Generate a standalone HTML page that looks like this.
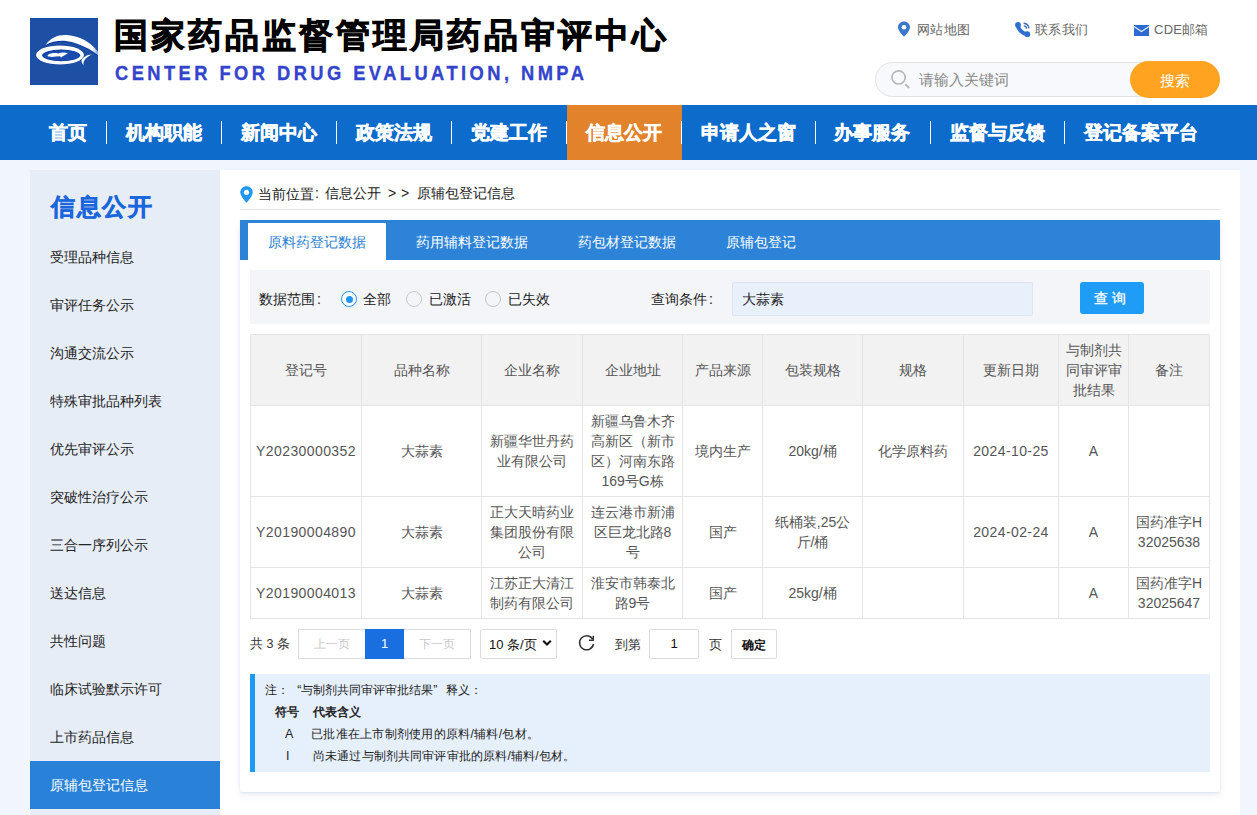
<!DOCTYPE html>
<html><head><meta charset="utf-8">
<style>
*{margin:0;padding:0;box-sizing:border-box}
html,body{width:1257px;height:815px;overflow:hidden}
body{background:#f1f6fe;font-family:"Liberation Sans",sans-serif;position:relative;color:#333}
.a{position:absolute;white-space:nowrap}
#hdr{position:absolute;left:0;top:0;width:1257px;height:105px;background:#fff}
#nav{position:absolute;left:0;top:105px;width:1257px;height:55px;background:#0d6bcb}
.ni{position:absolute;top:105px;height:55px;line-height:55px;color:#fff;font-size:18.5px;font-weight:bold;white-space:nowrap;-webkit-text-stroke:.5px #fff}
.sep{position:absolute;top:121px;width:1px;height:23px;background:#fff}
#cont{position:absolute;left:30px;top:170px;width:1210px;height:660px;background:#fff}
#side{position:absolute;left:30px;top:170px;width:190px;height:660px;background:#e7edf6}
.si{position:absolute;left:30px;width:190px;height:48px;line-height:48px;padding-left:20px;font-size:14px;color:#222;white-space:nowrap}
.si.on{background:#2a82d8;color:#fff}
#card{position:absolute;left:240px;top:220px;width:980px;height:572px;background:#fff;border-radius:2px;box-shadow:0 1px 3px rgba(60,100,160,.14),0 4px 8px rgba(60,100,160,.07)}
#tabs{position:absolute;left:240px;top:220px;width:980px;height:40px;background:#2c83d7}
.tb{position:absolute;top:224px;height:37px;line-height:37px;font-size:14px;color:#fff;white-space:nowrap}
table{position:absolute;left:250px;top:334px;border-collapse:collapse;table-layout:fixed;width:959px}
td,th{border:1px solid #e4e4e4;text-align:center;vertical-align:middle;font-size:14px;color:#555;line-height:20px;padding:4px 6px;font-weight:normal;word-break:break-all}
th{background:#f2f2f2}
td.n{letter-spacing:.4px;white-space:nowrap;padding:4px 0}
</style></head><body>
<div id="hdr"></div>
<!-- logo -->
<svg class="a" style="left:30px;top:18px" width="80" height="68" viewBox="0 0 80 68">
  <defs><clipPath id="cb"><rect x="0" y="0" width="68" height="67"/></clipPath><linearGradient id="fd" x1="0" y1="0" x2="1" y2="0"><stop offset="0.8" stop-color="#fff"/><stop offset="1" stop-color="#fff" stop-opacity="0"/></linearGradient></defs>
  <rect x="0" y="0" width="68" height="67" fill="#1d50a5"/>
  <path d="M14.5 27.5C20 19 28 15.5 37 16.2C49 17 60 23 68 33C71 37 73 41 74 44C70 39.5 65.5 34.5 59 31C52 27 44 23.5 36 22.6C28 22 21 23.5 14.5 27.5Z" fill="#083a9e" transform="translate(0,1.2)" clip-path="url(#cb)"/>
  <path d="M15.5 27C21 19.5 28 16.5 36.5 17C48.5 17.6 59.5 23.5 67 32.5C70 36 72.5 40 74 43.5C69.5 38.5 64.5 34 58 30.6C51 27 43.5 23.6 36 22.9C28.5 22.3 21.5 23.6 15.5 27Z" fill="url(#fd)"/>
  <ellipse cx="30" cy="37" rx="24.5" ry="9.9" fill="#083a9e"/>
  <ellipse cx="30" cy="37" rx="24" ry="9.4" fill="#fff"/>
  <ellipse cx="31.2" cy="37.3" rx="19" ry="5.9" fill="#0b3fa6"/>
  <ellipse cx="31.5" cy="37.6" rx="17.5" ry="5" fill="#1a4cad"/>
  <path d="M17.5 38C17.8 35.2 24 34.3 28.5 35.4C31 34.6 35 33.8 38 35.4C36 36.4 33.2 37.4 31.2 39.4L29.8 38.3C25 38.6 20.5 39.6 17.5 38Z" fill="#fff"/>
  <path d="M62 36.5C57 36.5 52.5 39.5 51.5 42.5C51.5 44.5 52.5 46 53.5 47.5C53.2 45.5 53.4 43.5 55 41.5C56.5 39.5 59 37.8 62 36.5Z" fill="#fff"/>
</svg>
<div class="a" style="left:114px;top:14px;font-size:34px;line-height:42px;font-weight:bold;color:#000;letter-spacing:3px;-webkit-text-stroke:0.8px #000">国家药品监督管理局药品审评中心</div>
<div class="a" style="left:114.5px;top:60.5px;font-size:20.8px;line-height:24px;font-weight:bold;color:#3344cc;letter-spacing:3.92px;transform:scaleX(.88);transform-origin:0 0;-webkit-text-stroke:.35px #3344cc">CENTER FOR DRUG EVALUATION, NMPA</div>

<div class="a" style="left:917px;top:20.5px;font-size:13px;letter-spacing:.25px;line-height:18px;color:#666">网站地图</div>
<div class="a" style="left:1035px;top:20.5px;font-size:13px;letter-spacing:.25px;line-height:18px;color:#666">联系我们</div>
<div class="a" style="left:1154px;top:20.5px;font-size:13px;letter-spacing:.25px;line-height:18px;color:#666">CDE邮箱</div>

<div class="a" style="left:875px;top:62px;width:300px;height:35px;border:1px solid #e3e3e3;border-radius:18px;background:#f8f9fc"></div>
<div class="a" style="left:919px;top:70px;font-size:15px;line-height:19px;color:#888">请输入关键词</div>
<div class="a" style="left:1130px;top:61px;width:90px;height:37px;border-radius:19px;background:#ffa321;color:#fff;font-size:15px;line-height:39px;text-align:center">搜索</div>

<svg class="a" style="left:897px;top:21px" width="14" height="16" viewBox="0 0 14 16"><path d="M7 0.5C3.6 0.5 1 3.1 1 6.3c0 3.8 6 9.4 6 9.4s6-5.6 6-9.4C13 3.1 10.4 0.5 7 0.5z" fill="#3a78cc"/><circle cx="7" cy="6.2" r="2.3" fill="#fff"/></svg>
<svg class="a" style="left:1015px;top:22px" width="16" height="16" viewBox="0 0 16 16"><path d="M3 3C2.6 6.8 7.4 11.8 12.2 12.3" stroke="#2f6fd0" stroke-width="4" stroke-linecap="round" fill="none"/><circle cx="3" cy="2.9" r="2.9" fill="#2f6fd0"/><circle cx="12.3" cy="12.2" r="2.9" fill="#2f6fd0"/><path d="M8.6 1.2A5.8 5.8 0 0 1 14 6.4" stroke="#3d68b8" stroke-width="1.4" fill="none"/><path d="M8.8 3.9A3 3 0 0 1 11.6 6.8" stroke="#3d68b8" stroke-width="1.4" fill="none"/></svg>
<svg class="a" style="left:1134px;top:25px" width="15" height="11" viewBox="0 0 15 11"><rect x="0" y="0" width="15" height="11" fill="#2f6ad0"/><path d="M0 1.5L7.5 6.5L15 1.5" stroke="#dceeff" stroke-width="1.3" fill="none"/></svg>
<svg class="a" style="left:890px;top:69px" width="21" height="21" viewBox="0 0 21 21"><circle cx="8.6" cy="8.4" r="6.6" stroke="#b9b9b9" stroke-width="1.7" fill="none"/><path d="M15.2 15.3L19.2 19" stroke="#b9b9b9" stroke-width="2.1"/></svg>
<div id="nav"></div>
<div class="sep" style="left:106px"></div><div class="sep" style="left:221px"></div><div class="sep" style="left:336px"></div><div class="sep" style="left:451px"></div><div class="sep" style="left:566px"></div>
<div class="a" style="left:567px;top:105px;width:115px;height:55px;background:#e2832c"></div>
<div class="sep" style="left:681px"></div><div class="sep" style="left:815px"></div><div class="sep" style="left:930px"></div><div class="sep" style="left:1064px"></div>
<div class="ni" style="left:49px">首页</div>
<div class="ni" style="left:126px">机构职能</div>
<div class="ni" style="left:241px">新闻中心</div>
<div class="ni" style="left:356px">政策法规</div>
<div class="ni" style="left:471px">党建工作</div>
<div class="ni" style="left:586px">信息公开</div>
<div class="ni" style="left:701px">申请人之窗</div>
<div class="ni" style="left:834px">办事服务</div>
<div class="ni" style="left:950px">监督与反馈</div>
<div class="ni" style="left:1084px">登记备案平台</div>

<div id="cont"></div>
<div id="side"></div>
<div class="a" style="left:51px;top:191px;font-size:24px;line-height:32px;font-weight:bold;color:#1a66dc;letter-spacing:1.6px;-webkit-text-stroke:.5px #1a66dc">信息公开</div>
<div class="si" style="top:233px">受理品种信息</div>
<div class="si" style="top:281px">审评任务公示</div>
<div class="si" style="top:329px">沟通交流公示</div>
<div class="si" style="top:377px">特殊审批品种列表</div>
<div class="si" style="top:425px">优先审评公示</div>
<div class="si" style="top:473px">突破性治疗公示</div>
<div class="si" style="top:521px">三合一序列公示</div>
<div class="si" style="top:569px">送达信息</div>
<div class="si" style="top:617px">共性问题</div>
<div class="si" style="top:665px">临床试验默示许可</div>
<div class="si" style="top:713px">上市药品信息</div>
<div class="si on" style="top:761px">原辅包登记信息</div>

<div id="card"></div>
<!-- breadcrumb -->
<svg class="a" style="left:240px;top:186px" width="13" height="17" viewBox="0 0 13 17"><path d="M6.5 0.3C3 0.3 0.3 3 0.3 6.4c0 3.9 6.2 10.3 6.2 10.3s6.2-6.4 6.2-10.3C12.7 3 10 0.3 6.5 0.3z" fill="#2196f3"/><circle cx="6.5" cy="6.3" r="2.6" fill="#fff"/></svg>
<div class="a" style="left:258px;top:184.5px;font-size:14px;line-height:18px;color:#222">当前位置</div>
<div class="a" style="left:315px;top:184px;font-size:14px;line-height:18px;color:#222">:</div>
<div class="a" style="left:325px;top:184px;font-size:14px;line-height:18px;color:#222">信息公开</div>
<div class="a" style="left:388px;top:184px;font-size:14px;line-height:18px;color:#222">&gt;</div>
<div class="a" style="left:401px;top:184px;font-size:14px;line-height:18px;color:#222">&gt;</div>
<div class="a" style="left:417px;top:184px;font-size:14px;line-height:18px;color:#222">原辅包登记信息</div>
<div class="a" style="left:240px;top:209px;width:980px;height:1px;background:#e6e6e6"></div>
<div id="tabs"></div>
<div class="a" style="left:248px;top:223px;width:138px;height:37px;background:#fff"></div>
<div class="tb" style="left:268px;color:#2b7fd6">原料药登记数据</div>
<div class="tb" style="left:416px">药用辅料登记数据</div>
<div class="tb" style="left:578px">药包材登记数据</div>
<div class="tb" style="left:726px">原辅包登记</div>
<!-- filter -->
<div class="a" style="left:250px;top:270px;width:960px;height:54px;background:#f3f5f9"></div>
<div class="a" style="left:259px;top:290px;font-size:14px;line-height:18px;color:#222">数据范围<span style="margin-left:2px">:</span></div>
<div class="a" style="left:341px;top:291px;width:16px;height:16px;border-radius:50%;border:1px solid #2196f3;background:#fff"></div>
<div class="a" style="left:345.5px;top:295.5px;width:7px;height:7px;border-radius:50%;background:#2196f3"></div>
<div class="a" style="left:363px;top:290px;font-size:14px;line-height:18px;color:#222">全部</div>
<div class="a" style="left:406px;top:291px;width:16px;height:16px;border-radius:50%;border:1.3px solid #c6c6c6"></div>
<div class="a" style="left:429px;top:290px;font-size:14px;line-height:18px;color:#222">已激活</div>
<div class="a" style="left:485px;top:291px;width:16px;height:16px;border-radius:50%;border:1.3px solid #c6c6c6"></div>
<div class="a" style="left:508px;top:290px;font-size:14px;line-height:18px;color:#222">已失效</div>
<div class="a" style="left:651px;top:290px;font-size:14px;line-height:18px;color:#222">查询条件<span style="margin-left:2px">:</span></div>
<div class="a" style="left:732px;top:282px;width:301px;height:34px;background:#e8f0fc;border:1px solid #dde4ee;border-radius:2px"></div>
<div class="a" style="left:742px;top:290px;font-size:14px;line-height:18px;color:#222">大蒜素</div>
<div class="a" style="left:1080px;top:282px;width:64px;height:32px;background:#1f9cf5;border-radius:3px;color:#fff;font-size:14px;line-height:32px;text-align:left;letter-spacing:4px;padding-left:14px;-webkit-text-stroke:.3px #fff">查询</div>
<!-- table -->
<table>
<colgroup><col style="width:111px"><col style="width:120px"><col style="width:101px"><col style="width:100px"><col style="width:80px"><col style="width:100px"><col style="width:101px"><col style="width:95px"><col style="width:70px"><col style="width:81px"></colgroup>
<tr style="height:71px"><th>登记号</th><th>品种名称</th><th>企业名称</th><th>企业地址</th><th>产品来源</th><th>包装规格</th><th>规格</th><th>更新日期</th><th>与制剂共同审评审批结果</th><th>备注</th></tr>
<tr style="height:91px"><td class="n">Y20230000352</td><td>大蒜素</td><td>新疆华世丹药业有限公司</td><td>新疆乌鲁木齐高新区（新市区）河南东路169号G栋</td><td>境内生产</td><td>20kg/桶</td><td>化学原料药</td><td class="n">2024-10-25</td><td>A</td><td></td></tr>
<tr style="height:71px"><td class="n">Y20190004890</td><td>大蒜素</td><td>正大天晴药业集团股份有限公司</td><td>连云港市新浦区巨龙北路8号</td><td>国产</td><td>纸桶装,25公斤/桶</td><td></td><td class="n">2024-02-24</td><td>A</td><td>国药准字H32025638</td></tr>
<tr style="height:51px"><td class="n">Y20190004013</td><td>大蒜素</td><td>江苏正大清江制药有限公司</td><td>淮安市韩泰北路9号</td><td>国产</td><td>25kg/桶</td><td></td><td></td><td>A</td><td>国药准字H32025647</td></tr>
</table>
<!-- pagination -->
<div class="a" style="left:250px;top:636px;font-size:12.5px;line-height:17px;color:#333">共 3 条</div>
<div class="a" style="left:298px;top:629px;width:173px;height:30px;border:1px solid #dcdcdc;background:#fff"></div>
<div class="a" style="left:314px;top:636px;font-size:12.3px;line-height:17px;color:#c8c8c8">上一页</div>
<div class="a" style="left:365px;top:629px;width:39px;height:30px;background:#1a6fe0;color:#fff;font-size:13px;line-height:30px;text-align:center">1</div>
<div class="a" style="left:419px;top:636px;font-size:12.3px;line-height:17px;color:#c8c8c8">下一页</div>
<div class="a" style="left:480px;top:629px;width:77px;height:30px;border:1px solid #dcdcdc;background:#fff;border-radius:2px"></div>
<div class="a" style="left:489px;top:636px;font-size:13px;line-height:17px;color:#111">10 条/页</div>
<svg class="a" style="left:542px;top:639px" width="10" height="8" viewBox="0 0 10 8"><path d="M1.2 1.8L5 5.6L8.8 1.8" stroke="#111" stroke-width="2.1" fill="none"/></svg>
<svg class="a" style="left:577px;top:634px" width="19" height="19" viewBox="0 0 19 19"><path d="M15.6 5.2A7 7 0 1 0 16.5 10" stroke="#333" stroke-width="1.5" fill="none"/><path d="M16.3 1.8V6.2H11.9" stroke="#333" stroke-width="1.5" fill="none"/></svg>
<div class="a" style="left:615px;top:636px;font-size:13px;line-height:17px;color:#333">到第</div>
<div class="a" style="left:649px;top:629px;width:50px;height:30px;border:1px solid #dcdcdc;background:#fff;border-radius:2px;color:#111;font-size:13px;line-height:28px;text-align:center">1</div>
<div class="a" style="left:709px;top:636px;font-size:13px;line-height:17px;color:#333">页</div>
<div class="a" style="left:731px;top:629px;width:46px;height:30px;border:1px solid #dcdcdc;background:#fff;border-radius:2px;color:#111;font-size:12px;line-height:30px;text-align:center;font-weight:bold">确定</div>
<!-- note -->
<div class="a" style="left:250px;top:674px;width:960px;height:98px;background:#e6f0fd;border-left:5px solid #1e9af5"></div>
<div class="a" style="left:265px;top:682px;font-size:12.3px;line-height:17px;color:#222">注：<span style="display:inline-block;width:1em;text-align:right">“</span>与制剂共同审评审批结果<span style="display:inline-block;width:1em;text-align:left">”</span>释义：</div>
<div class="a" style="left:275px;top:704px;font-size:12.3px;line-height:17px;color:#222;font-weight:bold">符号</div>
<div class="a" style="left:313px;top:704px;font-size:12.3px;line-height:17px;color:#222;font-weight:bold">代表含义</div>
<div class="a" style="left:285px;top:726px;font-size:12.5px;line-height:17px;color:#222">A</div>
<div class="a" style="left:311px;top:726px;font-size:12px;letter-spacing:.27px;line-height:17px;color:#222">已批准在上市制剂使用的原料/辅料/包材。</div>
<div class="a" style="left:286px;top:748px;font-size:12.5px;line-height:17px;color:#222">I</div>
<div class="a" style="left:313px;top:748px;font-size:12px;letter-spacing:.15px;line-height:17px;color:#222">尚未通过与制剂共同审评审批的原料/辅料/包材。</div>
</body></html>
